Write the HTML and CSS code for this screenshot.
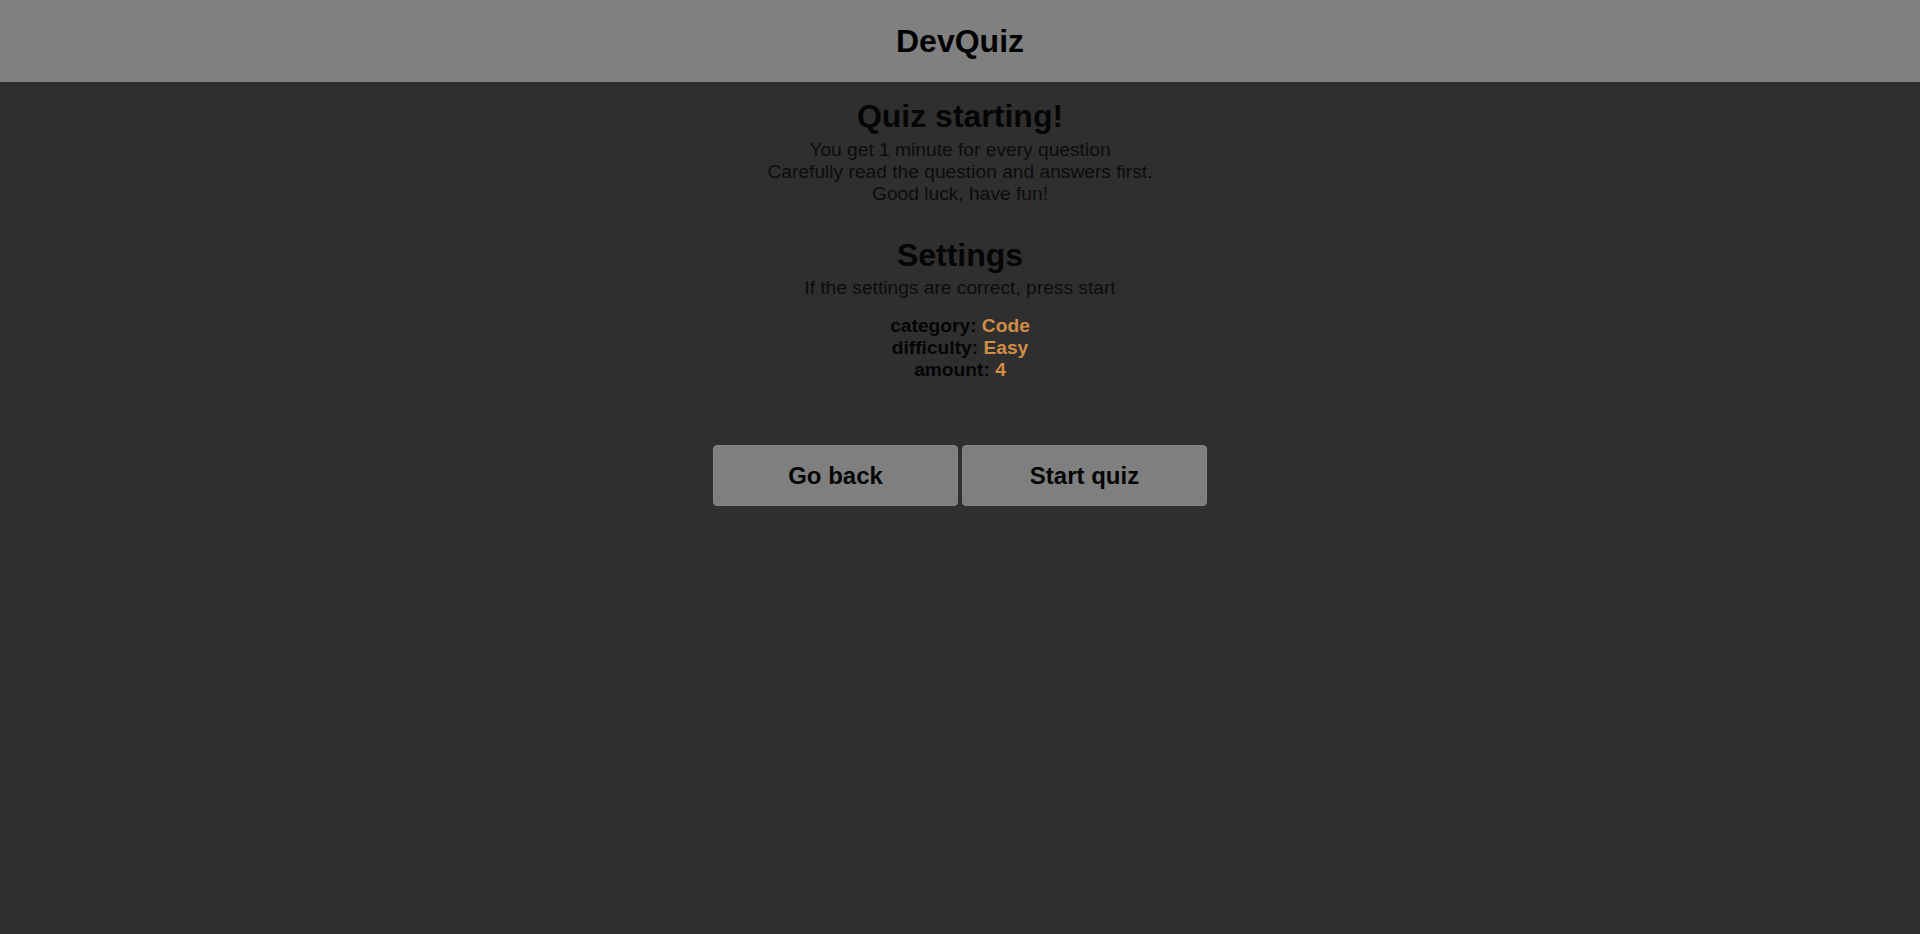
FILE: index.html
```html
<!DOCTYPE html>
<html lang="en">
<head>
<meta charset="utf-8">
<title>DevQuiz</title>
<link rel="stylesheet" href="styles.css">
</head>
<body>
<header class="topbar">
  <h1 class="brand">DevQuiz</h1>
</header>
<main class="start">
  <h2 class="title">Quiz starting!</h2>
  <p class="intro">You get 1 minute for every question<br>Carefully read the question and answers first.<br>Good luck, have fun!</p>
  <h2 class="title settings-title">Settings</h2>
  <p class="sub">If the settings are correct, press start</p>
  <ul class="settings">
    <li>category: <span class="val">Code</span></li>
    <li>difficulty: <span class="val">Easy</span></li>
    <li>amount: <span class="val">4</span></li>
  </ul>
  <div class="actions">
    <button class="btn" type="button">Go back</button>
    <button class="btn" type="button">Start quiz</button>
  </div>
</main>
</body>
</html>
```
FILE: styles.css
```css
html, body {
  margin: 0;
  padding: 0;
}
body {
  background: #2f2f2f;
  color: #000;
  font-family: "Liberation Sans", Arial, sans-serif;
  min-height: 934px;
}
.topbar {
  height: 82px;
  background: #808080;
  display: flex;
  align-items: center;
  justify-content: center;
}
.brand {
  margin: 0;
  font-size: 32px;
  font-weight: bold;
  color: #000;
}
.start {
  display: flex;
  flex-direction: column;
  align-items: center;
  text-align: center;
  padding-top: 16px;
}
.title {
  margin: 0;
  font-size: 32px;
  font-weight: bold;
  color: #050505;
}
.intro {
  margin: 4px 0 0;
  font-size: 19.2px;
  color: #0c0c0c;
}
.settings-title {
  margin-top: 32px;
}
.sub {
  margin: 3px 0 0;
  font-size: 19.2px;
  color: #0c0c0c;
}
.settings {
  list-style: none;
  margin: 16px 0 0;
  padding: 0;
  font-size: 19.2px;
  font-weight: bold;
  color: #050505;
}
.val {
  color: #d18c46;
}
.actions {
  margin-top: 64px;
  display: flex;
  gap: 4px;
}
.btn {
  width: 245px;
  height: 61px;
  background: #7f7f7f;
  border: 1px solid #868686;
  border-radius: 4px;
  font-family: "Liberation Sans", Arial, sans-serif;
  font-size: 24px;
  font-weight: bold;
  color: #050505;
  padding: 0;
  cursor: pointer;
}
```
